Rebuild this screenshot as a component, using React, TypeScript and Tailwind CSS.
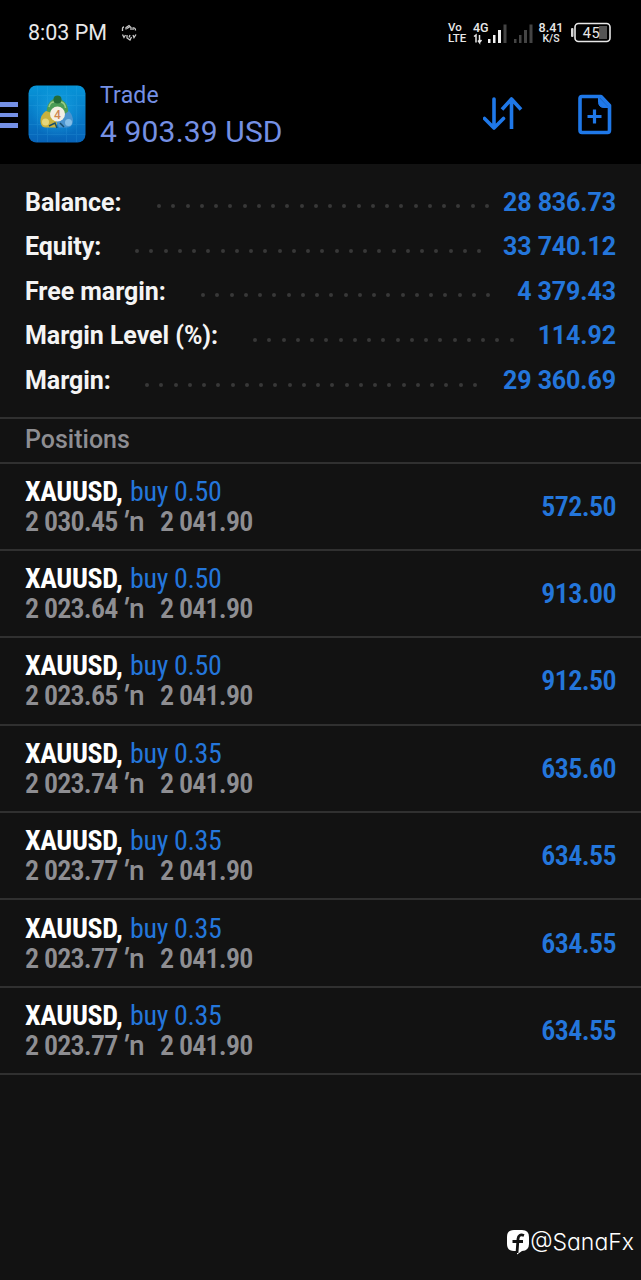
interface Summary {
  label: string;
  value: string;
  dots: number;
  dotsStart: string;
}

interface Position {
  volume: string;
  open: string;
  profit: string;
}

const summary: Summary[] = [
  { label: 'Balance:', value: '28 836.73', dots: 24, dotsStart: 'w-[132px]' },
  { label: 'Equity:', value: '33 740.12', dots: 25, dotsStart: 'w-[110px]' },
  { label: 'Free margin:', value: '4 379.43', dots: 21, dotsStart: 'w-[176px]' },
  { label: 'Margin Level (%):', value: '114.92', dots: 19, dotsStart: 'w-[228px]' },
  { label: 'Margin:', value: '29 360.69', dots: 24, dotsStart: 'w-[120px]' },
];

const positions: Position[] = [
  { volume: '0.50', open: '2 030.45', profit: '572.50' },
  { volume: '0.50', open: '2 023.64', profit: '913.00' },
  { volume: '0.50', open: '2 023.65', profit: '912.50' },
  { volume: '0.35', open: '2 023.74', profit: '635.60' },
  { volume: '0.35', open: '2 023.77', profit: '634.55' },
  { volume: '0.35', open: '2 023.77', profit: '634.55' },
  { volume: '0.35', open: '2 023.77', profit: '634.55' },
];

function StatusBar() {
  return (
    <div className="flex h-[65px] items-center pr-[29px] pl-[28px] text-[#e8e8e8]">
      <span className="text-[21.5px] leading-[65px]">8:03 PM</span>
      <svg className="ml-[14px]" width="16" height="18" viewBox="0 0 16 18" fill="none" stroke="#c8c8c8" strokeWidth="1.3">
        <path d="M1.5 7V4.5Q1.5 3 3 3M5 5.5V3.5L8 1.5L10 3.5V6M6 4.5L8.5 3M12 6V4Q14.5 3.5 14.5 6.5" />
        <path d="M1.5 10.5L3 13.5L4.5 11M6 11V14L9 16L10.5 13M9 11L8 13.5M12 11L13 13.5L15 10.5" />
      </svg>

      <div className="ml-auto flex items-center font-medium">
        <div className="w-[18px] text-[11.5px] leading-[11px]">
          <div>Vo</div>
          <div>LTE</div>
        </div>
        <svg className="ml-[7px] overflow-visible" width="60" height="22" viewBox="0 0 60 22">
          <text x="0" y="10" fontSize="12.5" fontWeight="500" fill="#e8e8e8">4G</text>
          <path d="M1 14.5L3 13V20.5M6.5 13V20.5L5 18.5M6.5 20.5L8.5 18" fill="none" stroke="#e8e8e8" strokeWidth="1.5" />
          <path d="M15 17h2.5v4h-2.5zM20 13h2.5v8h-2.5zM25 8h3v13h-3z" fill="#f2f2f2" />
          <path d="M30.5 2.5h3v18.5h-3zM41 17h2.5v4h-2.5zM46 13h2.5v8h-2.5zM51 8h3v13h-3zM56.5 2.5h3v18.5h-3z" fill="#444" />
        </svg>
        <div className="ml-[5px] w-[26px] text-center text-[12.5px] leading-[11px]">
          <div>8.41</div>
          <div className="text-[10.5px]">K/S</div>
        </div>
        <svg className="ml-[7px]" width="41" height="22" viewBox="0 0 41 22">
          <rect x="0" y="6" width="2.5" height="9" rx="1" fill="#d8d8d8" />
          <rect x="28" y="4" width="8" height="13" fill="#555" />
          <rect x="4" y="1.5" width="35" height="18" rx="3.5" fill="none" stroke="#e8e8e8" strokeWidth="1.6" />
          <text x="20.5" y="15.5" textAnchor="middle" fontSize="14.5" fontWeight="400" letterSpacing="0.5" fill="#e8e8e8">45</text>
        </svg>
      </div>
    </div>
  );
}

function AppLogo() {
  return (
    <svg className="ml-[10px] shrink-0" width="58" height="58" viewBox="0 0 58 58">
      <defs>
        <linearGradient id="tile" x1="0" y1="0" x2="0" y2="1">
          <stop offset="0" stopColor="#0795d8" />
          <stop offset="1" stopColor="#0763b8" />
        </linearGradient>
        <radialGradient id="glow">
          <stop offset="0" stopColor="#22b4ef" />
          <stop offset="1" stopColor="#22b4ef" stopOpacity="0" />
        </radialGradient>
      </defs>
      <rect x="0.5" y="0.5" width="57" height="57" rx="8" fill="url(#tile)" />
      <circle cx="29" cy="27" r="26" fill="url(#glow)" opacity="0.6" />
      <path d="M9.5 1V57M19.5 1V57M38.5 1V57M48.5 1V57M1 10.5H57M1 20.5H57M1 39.5H57M1 49.5H57" stroke="#4dbcf2" strokeWidth="1" opacity="0.15" />
      <path d="M19 28Q18 19 24 15Q29 10 34 15Q41 19 40 28L35 31H23z" fill="#4b9c55" />
      <path d="M18 26Q12 30 12.5 37Q13 42.5 18 42.5H28L30 36L24 28z" fill="#c9b13d" />
      <path d="M35 30L41 26Q45.5 31 45 37Q44 42.5 38 42.5H31L28 36z" fill="#4a94cf" />
      <path d="M21 22Q22 17 26 17M33 17Q37 18 37.5 23" stroke="#9ccc84" strokeWidth="1.5" fill="none" />
      <circle cx="29.5" cy="14.5" r="4" fill="#226b38" />
      <circle cx="17.5" cy="37" r="3.5" fill="#e5d77b" />
      <circle cx="40.5" cy="37.5" r="3.5" fill="#85bfe8" />
      <path d="M21 41L27 38L29 43M32 38L36 42" stroke="#174f6d" strokeWidth="1.5" fill="none" />
      <circle cx="29.5" cy="29" r="7.5" fill="#f4efe4" />
      <text x="29.5" y="33.5" textAnchor="middle" fontSize="12" fontWeight="500" fill="#cf8650">4</text>
    </svg>
  );
}

function Header() {
  return (
    <header className="flex h-[99px] items-start text-[#7590e4]">
      <div className="mt-[37px] flex w-[18px] shrink-0 flex-col gap-[6px]">
        <span className="h-[4.5px] bg-[#7590e4]" />
        <span className="h-[4.5px] bg-[#7590e4]" />
        <span className="h-[4.5px] bg-[#7590e4]" />
      </div>
      <div className="mt-[20px]">
        <AppLogo />
      </div>
      <div className="mt-[16px] ml-[14px] whitespace-nowrap">
        <div className="text-[23px] leading-[30px] tracking-[0.2px]">Trade</div>
        <div className="mt-[4px] text-[30px] leading-[34px] tracking-[0.15px]">4 903.39 USD</div>
      </div>
      <svg className="mt-[30px] ml-auto" width="40" height="40" viewBox="0 0 40 40" fill="none" stroke="#1f78e8" strokeWidth="3.6" strokeLinecap="round" strokeLinejoin="round">
        <path d="M11 4V33M1.5 23.5L11 33L20.5 23.5" />
        <path d="M28.5 34V4M19 14.5L28.5 4L38 14.5" strokeLinecap="butt" />
      </svg>
      <svg className="mt-[29px] mr-[29px] ml-[55px]" width="34" height="41" viewBox="0 0 34 41" fill="none" stroke="#1f78e8">
        <path d="M4 2.5H23L31.5 11.5V36Q31.5 38.5 29.5 38.5H4Q2 38.5 2 36V4.5Q2 2.5 4 2.5z" strokeWidth="3.6" strokeLinejoin="round" />
        <path d="M20.5 3V8.5Q21 13.5 26 13.5H31z" fill="#1f78e8" />
        <path d="M16.5 15.5V29.5M9.5 22.5H23.5" strokeWidth="3.2" />
      </svg>
    </header>
  );
}

function SummaryRow({ item }: { item: Summary }) {
  return (
    <div className="flex h-[44.6px] items-center px-[25px] text-[25px]">
      <span className={`shrink-0 font-bold tracking-[-0.06px] whitespace-nowrap text-[#f4f4f4] ${item.dotsStart}`}>
        {item.label}
      </span>
      <div className="mt-[8px] flex shrink-0 gap-[10.25px]">
        {Array.from({ length: item.dots }, (_, i) => (
          <span key={i} className="size-[4px] rounded-full bg-[#383838]" />
        ))}
      </div>
      <span className="ml-auto font-bold tracking-[-0.1px] whitespace-nowrap text-[#2476db]">{item.value}</span>
    </div>
  );
}

function PositionRow({ position }: { position: Position }) {
  return (
    <div className="flex h-[87.4px] items-center justify-between border-b-2 border-[#303030] px-[25px] text-[28px] font-stretch-condensed">
      <div className="mt-px leading-[30px] whitespace-nowrap">
        <div className="flex h-[30px]">
          <span className="w-[105px] font-bold tracking-[-0.4px] text-white">XAUUSD,</span>
          <span className="tracking-[-0.35px] text-[#2476db]">buy {position.volume}</span>
        </div>
        <div className="flex h-[30px] font-semibold text-[#8e8e92]">
          <span className="w-[98px] tracking-[-0.8px]">{position.open}</span>
          <span className="w-[6px] -skew-x-12 font-bold font-stretch-normal">′</span>
          <span className="w-[31px] text-[28px] font-medium font-stretch-normal">n</span>
          <span className="tracking-[-0.8px]">2 041.90</span>
        </div>
      </div>
      <span className="mt-px font-semibold tracking-[-0.6px] text-[#2476db]">{position.profit}</span>
    </div>
  );
}

function Watermark() {
  return (
    <div className="mt-auto mb-[22px] flex items-center justify-end pr-[7px] text-white">
      <svg width="24" height="26" viewBox="0 0 24 26">
        <path d="M8 1H16Q23 1 23 8V15Q23 21.5 16 22L11 25.5V22H8Q1 22 1 15V8Q1 1 8 1z" fill="#fff" />
        <path d="M18 6.5Q12.5 4.5 12 10L11 24M6.5 12.5H17" fill="none" stroke="#121212" strokeWidth="2.8" />
      </svg>
      <span className="font-['Inter',sans-serif] text-[23px] leading-[32px] font-[350] [font-feature-settings:'cv11']">@SanaFx</span>
    </div>
  );
}

export default function App() {
  return (
    <div className="flex h-[1280px] w-[641px] flex-col overflow-hidden bg-[#121212] font-['Roboto',sans-serif]">
      <div className="h-[164px] shrink-0 bg-black">
        <StatusBar />
        <Header />
      </div>
      <section className="h-[255px] shrink-0 border-b-2 border-[#303030] pt-[16px]">
        {summary.map((item) => (
          <SummaryRow key={item.label} item={item} />
        ))}
      </section>
      <h2 className="flex h-[44.5px] shrink-0 items-center border-b-2 border-[#303030] px-[25px] pb-px text-[25px] font-medium text-[#8e8e92]">
        Positions
      </h2>
      <main>
        {positions.map((position, i) => (
          <PositionRow key={i} position={position} />
        ))}
      </main>
      <Watermark />
    </div>
  );
}
